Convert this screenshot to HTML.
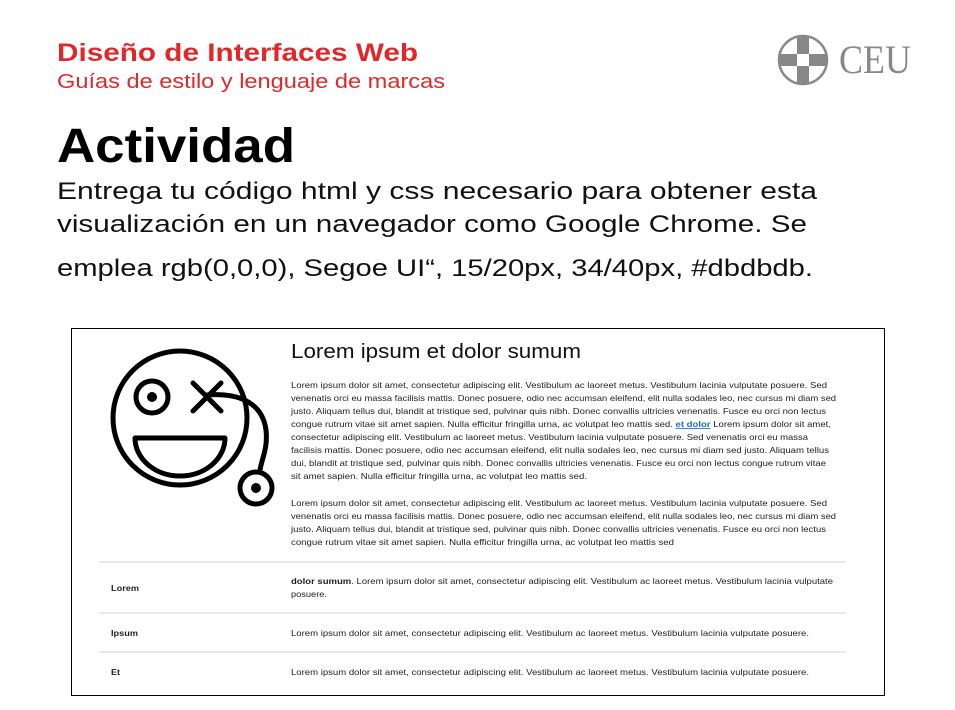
<!DOCTYPE html>
<html><head><meta charset="utf-8"><style>
html,body{margin:0;padding:0;background:#fff;width:955px;height:710px;overflow:hidden}
svg{position:absolute;left:0;top:0}
</style></head><body>
<svg width="955" height="710" viewBox="0 0 955 710" xmlns="http://www.w3.org/2000/svg" font-family="Liberation Sans, sans-serif">
<text x="57" y="61" font-size="25" font-weight="bold" fill="#e0282a" textLength="361" lengthAdjust="spacingAndGlyphs">Diseño de Interfaces Web</text>
<text x="57" y="88" font-size="20" fill="#e0282a" textLength="388" lengthAdjust="spacingAndGlyphs">Guías de estilo y lenguaje de marcas</text>
<g>
<circle cx="803" cy="60" r="24" fill="none" stroke="#888" stroke-width="2.5"/>
<path d="M797 37 H809 V84 H797Z M780 54 H826 V66 H780Z" fill="#888"/>
<rect x="797" y="54" width="12" height="12" fill="#fff"/>
<text x="839" y="73" font-family="Liberation Serif, serif" font-size="40" fill="#888" textLength="72" lengthAdjust="spacingAndGlyphs">CEU</text>
</g>
<text x="57" y="162" font-size="48" font-weight="bold" fill="#000" textLength="238" lengthAdjust="spacingAndGlyphs">Actividad</text>
<g font-size="24" fill="#111">
<text x="57" y="199" textLength="760" lengthAdjust="spacingAndGlyphs">Entrega tu código html y css necesario para obtener esta</text>
<text x="57" y="232" textLength="750" lengthAdjust="spacingAndGlyphs">visualización en un navegador como Google Chrome. Se</text>
<text x="57" y="276" textLength="756" lengthAdjust="spacingAndGlyphs">emplea rgb(0,0,0), Segoe UI“, 15/20px, 34/40px, #dbdbdb.</text>
</g>
<rect x="71.5" y="328.5" width="813" height="367" fill="none" stroke="#000" stroke-width="1"/>
<g fill="none" stroke="#000" stroke-width="5" stroke-linecap="round">
<circle cx="180" cy="418" r="67"/>
<circle cx="152" cy="397" r="16"/>
<path d="M193 383 L221 411 M221 383 L193 411"/>
<path d="M135 438 H225 A45 38 0 0 1 135 438 Z" stroke-linejoin="round"/>
<path d="M207 395 C235 393 262 400 266 430 C268 448 262 458 260 470"/>
<circle cx="256" cy="488" r="16"/>
</g>
<circle cx="152" cy="397" r="5"/>
<circle cx="256" cy="488" r="5"/>
<text x="291" y="358" font-size="20" fill="#111" textLength="290" lengthAdjust="spacingAndGlyphs">Lorem ipsum et dolor sumum</text>
<g font-size="8.3" fill="#222" lengthAdjust="spacingAndGlyphs">
<text x="291" y="388" textLength="536" lengthAdjust="spacingAndGlyphs">Lorem ipsum dolor sit amet, consectetur adipiscing elit. Vestibulum ac laoreet metus. Vestibulum lacinia vulputate posuere. Sed</text>
<text x="291" y="401" textLength="545" lengthAdjust="spacingAndGlyphs">venenatis orci eu massa facilisis mattis. Donec posuere, odio nec accumsan eleifend, elit nulla sodales leo, nec cursus mi diam sed</text>
<text x="291" y="414" textLength="535" lengthAdjust="spacingAndGlyphs">justo. Aliquam tellus dui, blandit at tristique sed, pulvinar quis nibh. Donec convallis ultricies venenatis. Fusce eu orci non lectus</text>
<text x="291" y="427" textLength="540" lengthAdjust="spacingAndGlyphs">congue rutrum vitae sit amet sapien. Nulla efficitur fringilla urna, ac volutpat leo mattis sed. <tspan fill="#1a6fc0" font-weight="bold" text-decoration="underline">et dolor</tspan> Lorem ipsum dolor sit amet,</text>
<text x="291" y="440" textLength="517" lengthAdjust="spacingAndGlyphs">consectetur adipiscing elit. Vestibulum ac laoreet metus. Vestibulum lacinia vulputate posuere. Sed venenatis orci eu massa</text>
<text x="291" y="453" textLength="538" lengthAdjust="spacingAndGlyphs">facilisis mattis. Donec posuere, odio nec accumsan eleifend, elit nulla sodales leo, nec cursus mi diam sed justo. Aliquam tellus</text>
<text x="291" y="466" textLength="535" lengthAdjust="spacingAndGlyphs">dui, blandit at tristique sed, pulvinar quis nibh. Donec convallis ultricies venenatis. Fusce eu orci non lectus congue rutrum vitae</text>
<text x="291" y="479" textLength="296" lengthAdjust="spacingAndGlyphs">sit amet sapien. Nulla efficitur fringilla urna, ac volutpat leo mattis sed.</text>
<text x="291" y="506" textLength="536" lengthAdjust="spacingAndGlyphs">Lorem ipsum dolor sit amet, consectetur adipiscing elit. Vestibulum ac laoreet metus. Vestibulum lacinia vulputate posuere. Sed</text>
<text x="291" y="519" textLength="545" lengthAdjust="spacingAndGlyphs">venenatis orci eu massa facilisis mattis. Donec posuere, odio nec accumsan eleifend, elit nulla sodales leo, nec cursus mi diam sed</text>
<text x="291" y="532" textLength="535" lengthAdjust="spacingAndGlyphs">justo. Aliquam tellus dui, blandit at tristique sed, pulvinar quis nibh. Donec convallis ultricies venenatis. Fusce eu orci non lectus</text>
<text x="291" y="545" textLength="383" lengthAdjust="spacingAndGlyphs">congue rutrum vitae sit amet sapien. Nulla efficitur fringilla urna, ac volutpat leo mattis sed</text>
<text x="291" y="584" textLength="542" lengthAdjust="spacingAndGlyphs"><tspan font-weight="bold">dolor sumum</tspan>. Lorem ipsum dolor sit amet, consectetur adipiscing elit. Vestibulum ac laoreet metus. Vestibulum lacinia vulputate</text>
<text x="291" y="597" textLength="36" lengthAdjust="spacingAndGlyphs">posuere.</text>
<text x="291" y="636" textLength="518" lengthAdjust="spacingAndGlyphs">Lorem ipsum dolor sit amet, consectetur adipiscing elit. Vestibulum ac laoreet metus. Vestibulum lacinia vulputate posuere.</text>
<text x="291" y="675" textLength="518" lengthAdjust="spacingAndGlyphs">Lorem ipsum dolor sit amet, consectetur adipiscing elit. Vestibulum ac laoreet metus. Vestibulum lacinia vulputate posuere.</text>
<text x="111" y="591" font-weight="bold" textLength="28" lengthAdjust="spacingAndGlyphs">Lorem</text>
<text x="111" y="636" font-weight="bold" textLength="27" lengthAdjust="spacingAndGlyphs">Ipsum</text>
<text x="111" y="675" font-weight="bold" textLength="9" lengthAdjust="spacingAndGlyphs">Et</text>
</g>
<g stroke="#e2e2e2" stroke-width="1.5">
<line x1="99" y1="562" x2="846" y2="562"/>
<line x1="99" y1="613" x2="846" y2="613"/>
<line x1="99" y1="652" x2="846" y2="652"/>
</g>
</svg>
</body></html>
